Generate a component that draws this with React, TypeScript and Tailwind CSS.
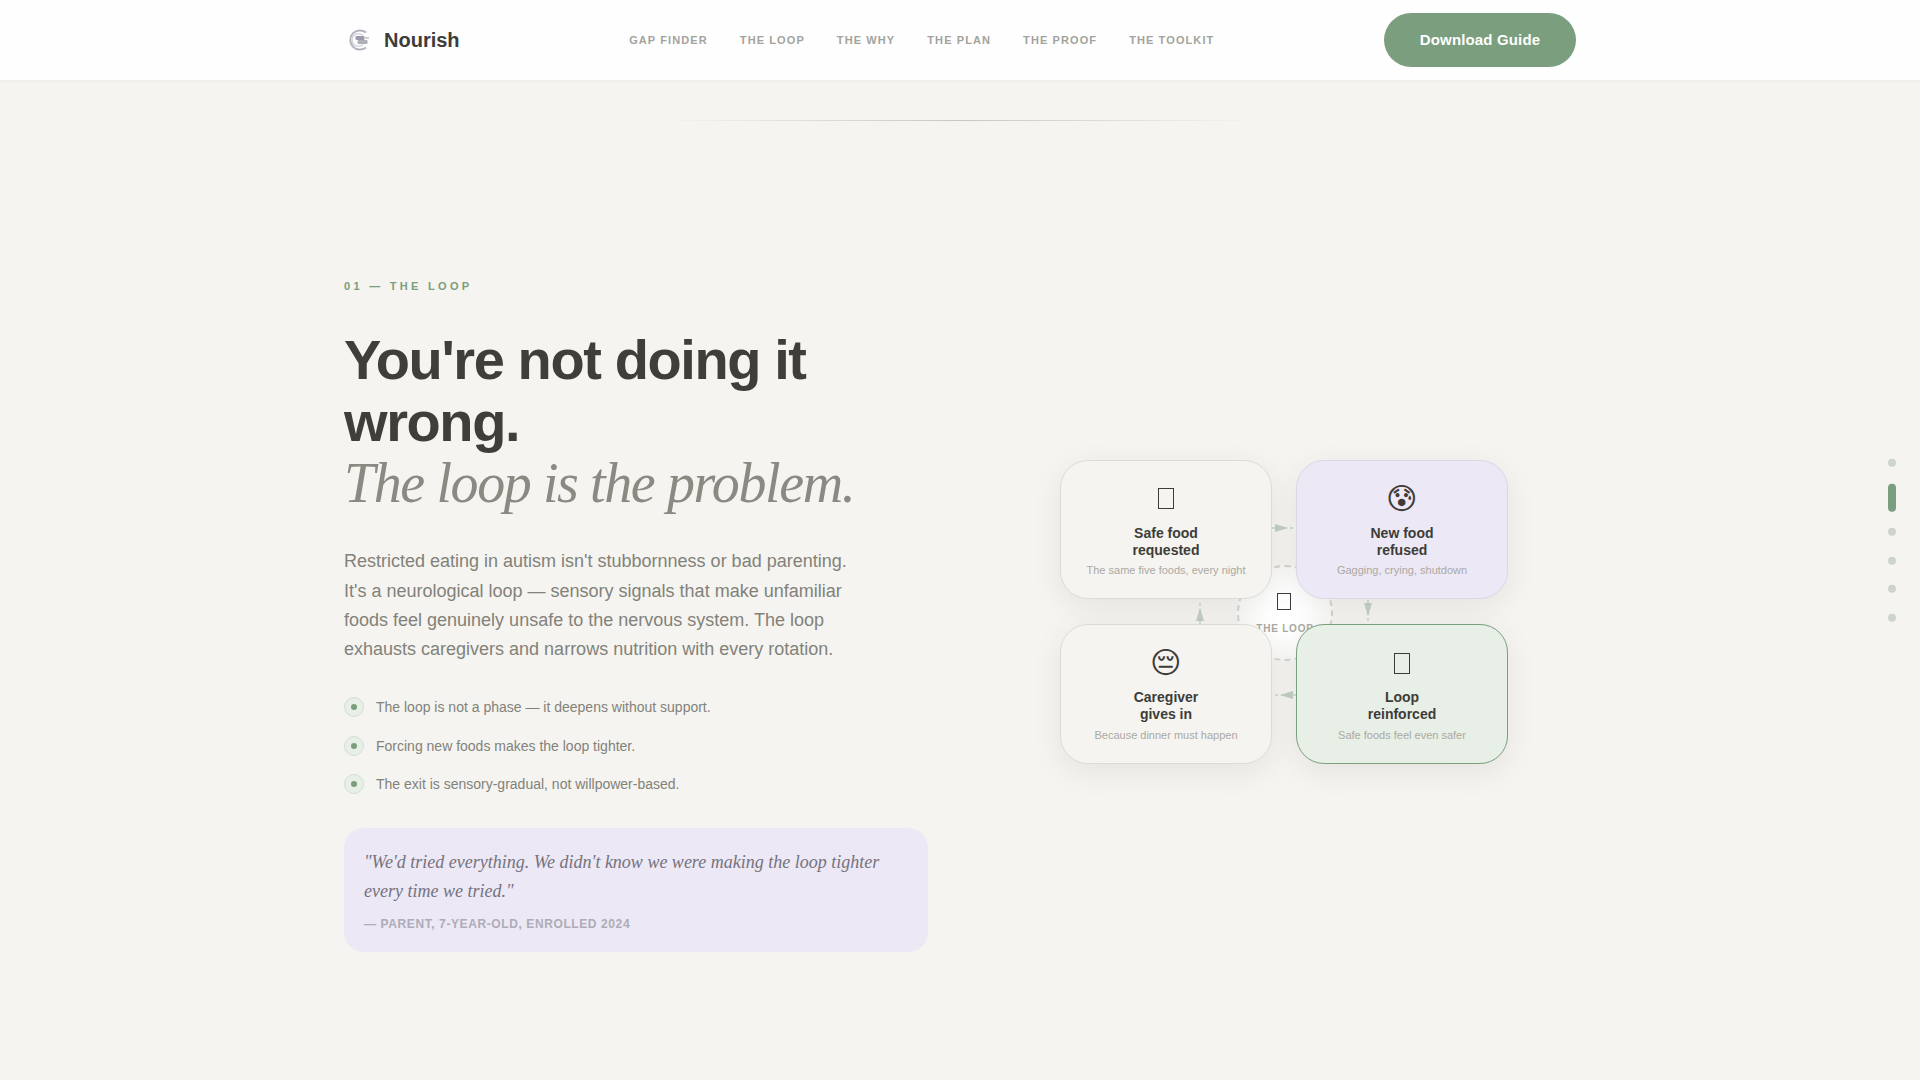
import type { ReactNode } from "react";

const navLinks = ["GAP FINDER", "THE LOOP", "THE WHY", "THE PLAN", "THE PROOF", "THE TOOLKIT"];

const bullets = [
  "The loop is not a phase — it deepens without support.",
  "Forcing new foods makes the loop tighter.",
  "The exit is sensory-gradual, not willpower-based.",
];

function Logo() {
  return (
    <svg width="24" height="24" viewBox="0 0 24 24" className="shrink-0">
      <path d="M18 4.6A9.6 9.6 0 1 0 18 19.4" fill="none" stroke="#b3b2bf" strokeWidth="2" />
      <path d="M15 7.5A6.4 6.4 0 1 0 15 16.5" fill="none" stroke="#d2d1dc" strokeWidth="1.4" />
      <rect x="7.5" y="8" width="9" height="4" rx="1" fill="#9a99ad" />
      <rect x="9.5" y="12" width="10" height="4" rx="1" fill="#adb0b5" />
      <rect x="16" y="9" width="5" height="2" fill="#cdcfd1" />
    </svg>
  );
}

function Arrow({ dir }: { dir: "right" | "down" | "left" | "up" }) {
  const rotate = {
    right: "rotate-0",
    down: "rotate-90",
    left: "rotate-180",
    up: "-rotate-90",
  }[dir];
  return (
    <svg width="24" height="10" viewBox="0 0 24 10" className={rotate}>
      <line x1="0" y1="5" x2="24" y2="5" stroke="#c8d3c8" strokeWidth="1.5" strokeDasharray="3 3" />
      <path d="M3 1 L16 5 L3 9 Z" fill="#c2d0c2" />
    </svg>
  );
}

// the icons that show up as an empty box in the picture
const boxIcon = <span className="block h-[21px] w-[16px] border-[1.5px] border-[#3d3c38]" />;

function LoopCard({
  icon,
  title,
  sub,
  className,
}: {
  icon: ReactNode;
  title: string[];
  sub: string;
  className: string;
}) {
  return (
    <div
      className={`relative z-10 h-[139.5px] rounded-[28px] border pt-[18px] text-center shadow-[0_8px_32px_rgba(0,0,0,0.07)] ${className}`}
    >
      <div className="flex h-[40px] items-center justify-center text-[30px] leading-[40px] text-[#3d3c38] font-['DejaVu_Sans',sans-serif]">
        {icon}
      </div>
      <div className="mt-[6px] text-[14px] font-bold leading-[17px] text-[#3d3c38]">
        {title[0]}
        <br />
        {title[1]}
      </div>
      <div className="mt-[3.5px] text-[11px] leading-[17px] text-[#aaa9a3]">{sub}</div>
    </div>
  );
}

function LoopDiagram() {
  return (
    <div className="relative grid w-[448px] grid-cols-2 gap-x-[24px] gap-y-[25px]">
      <div className="absolute left-[177px] top-[105px] flex h-[96px] w-[96px] flex-col items-center rounded-full border-2 border-dashed border-[#d2d5cd] bg-[radial-gradient(circle,#ffffff_30%,#f5f4f0_100%)] pt-[26px]">
        <span className="-ml-[2px] block h-[17px] w-[14px] border-[1.5px] border-[#3d3c38]" />
        <span className="mt-[12px] text-[10px] font-bold leading-[14px] tracking-[0.08em] text-[#aaa9a3]">THE LOOP</span>
      </div>
      <LoopCard icon={boxIcon} title={["Safe food", "requested"]} sub="The same five foods, every night" className="border-[#dcdcd6] bg-[#f5f4f0]" />
      <LoopCard icon="😰" title={["New food", "refused"]} sub="Gagging, crying, shutdown" className="border-[#dbd8e6] bg-[#ece8f5]" />
      <LoopCard icon="😔" title={["Caregiver", "gives in"]} sub="Because dinner must happen" className="border-[#dcdcd6] bg-[#f5f4f0]" />
      <LoopCard icon={boxIcon} title={["Loop", "reinforced"]} sub="Safe foods feel even safer" className="border-[#7a9e7e] bg-[#e8efe6]" />
      <div className="absolute left-[212px] top-[63px] z-0 flex w-[24px] justify-center"><Arrow dir="right" /></div>
      <div className="absolute left-[296px] top-[147px] z-0 flex w-[24px] justify-center"><Arrow dir="down" /></div>
      <div className="absolute left-[212px] top-[230px] z-0 flex w-[24px] justify-center"><Arrow dir="left" /></div>
      <div className="absolute left-[128px] top-[147px] z-0 flex w-[24px] justify-center"><Arrow dir="up" /></div>
    </div>
  );
}

function SideDots() {
  return (
    <div className="fixed right-[24px] top-1/2 flex -translate-y-1/2 flex-col items-center gap-[20.5px]">
      <span className="h-[8px] w-[8px] rounded-full bg-[#cdd4cc]" />
      <span className="my-[-4px] h-[28px] w-[8px] rounded-full bg-[#7a9e7e]" />
      <span className="h-[8px] w-[8px] rounded-full bg-[#cdd4cc]" />
      <span className="h-[8px] w-[8px] rounded-full bg-[#cdd4cc]" />
      <span className="h-[8px] w-[8px] rounded-full bg-[#cdd4cc]" />
      <span className="h-[8px] w-[8px] rounded-full bg-[#cdd4cc]" />
    </div>
  );
}

export default function App() {
  return (
    <div className="h-[1080px] overflow-hidden bg-[#f5f4f0] font-['Liberation_Sans',Arial,sans-serif]">
      <nav className="h-[80px] bg-[#fefefe] shadow-[0_1px_4px_rgba(0,0,0,0.04)]">
        <div className="mx-auto flex h-full w-[1232px] items-center justify-between">
          <div className="flex items-center gap-[12px] pl-[4px]">
            <Logo />
            <span className="text-[20px] font-bold leading-none text-[#3d3c38]">Nourish</span>
          </div>
          <div className="flex items-center gap-[32px]">
            {navLinks.map((link) => (
              <span key={link} className="text-[11px] font-bold tracking-[0.1em] text-[#a3a39d]">
                {link}
              </span>
            ))}
          </div>
          <button className="h-[54px] w-[192px] rounded-full bg-[#7a9e7e] text-[15px] font-bold tracking-[0.01em] text-white">
            Download Guide
          </button>
        </div>
      </nav>

      <div className="mx-auto mt-[40px] h-px w-[600px] bg-gradient-to-r from-transparent via-[#c8c8c0] to-transparent" />

      <main className="mx-auto mt-[152px] grid w-[1232px] grid-cols-[584px_1fr] gap-x-[64px]">
        <section>
          <div className="text-[11px] font-bold leading-[26px] tracking-[0.3em] text-[#7a9e7e]">01 — THE LOOP</div>
          <h1 className="mt-[30px] text-[56px] font-bold leading-[61.6px] tracking-[-0.025em] text-[#3f3e3a]">
            You're not doing it
            <br />
            wrong.
            <br />
            <span className="font-['Liberation_Serif',serif] font-normal italic text-[#8a8a82]">The loop is the problem.</span>
          </h1>
          <p className="mt-[32.4px] w-[520px] text-[18px] leading-[29.4px] text-[#82827a]">
            Restricted eating in autism isn't stubbornness or bad parenting. It's a neurological loop — sensory signals that make unfamiliar foods feel genuinely unsafe to the nervous system. The loop exhausts caregivers and narrows nutrition with every rotation.
          </p>
          <ul className="mt-[32.3px] flex flex-col gap-[18.5px]">
            {bullets.map((text) => (
              <li key={text} className="flex items-center gap-[12px] text-[14px] leading-[20px] text-[#82827a]">
                <span className="flex h-[20px] w-[20px] items-center justify-center rounded-full border border-[#d3e0d3] bg-[#e8efe6]">
                  <span className="h-[6px] w-[6px] rounded-full bg-[#7a9e7e]" />
                </span>
                {text}
              </li>
            ))}
          </ul>
          <blockquote className="mt-[33.7px] h-[124.2px] rounded-[20px] bg-[#ece8f5] px-[20px] pt-[20px]">
            <p className="font-['Liberation_Serif',serif] text-[18px] italic leading-[29.4px] text-[#75737e]">
              "We'd tried everything. We didn't know we were making the loop tighter every time we tried."
            </p>
            <div className="mt-[8px] text-[12px] font-bold leading-[18px] tracking-[0.05em] text-[#aeacb8]">
              — PARENT, 7-YEAR-OLD, ENROLLED 2024
            </div>
          </blockquote>
        </section>
        <section className="flex items-center justify-center pb-[1.5px]">
          <LoopDiagram />
        </section>
      </main>

      <SideDots />
    </div>
  );
}
